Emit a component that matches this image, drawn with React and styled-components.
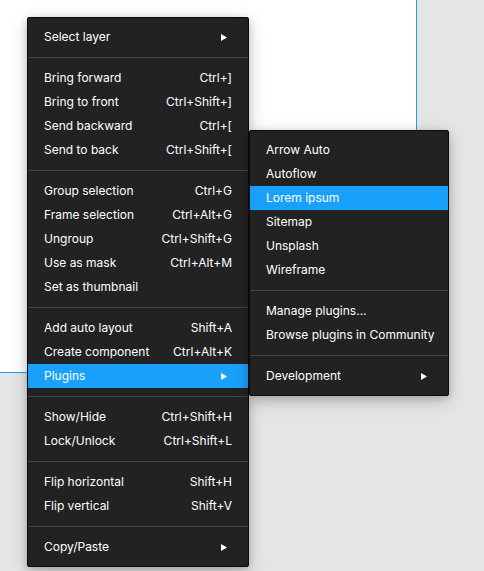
import React from "react";
import styled, { createGlobalStyle } from "styled-components";

const Global = createGlobalStyle`
  html, body { margin: 0; padding: 0; }
  body {
    background: #e5e5e5;
    font-family: Inter, "Noto Sans", sans-serif;
  }
`;

const Page = styled.div`
  position: relative;
  width: 484px;
  height: 571px;
  overflow: hidden;
  background: #e5e5e5;
`;

const Frame = styled.div`
  width: 416px;
  height: 372px;
  background: #ffffff;
  border-right: 1px solid #18a0fb;
  border-bottom: 1px solid #18a0fb;
`;

const Menu = styled.div`
  position: absolute;
  left: ${(p) => p.$left}px;
  top: ${(p) => p.$top}px;
  width: ${(p) => p.$width}px;
  box-sizing: border-box;
  padding: 7px 0;
  background: #222222;
  border: 1px solid #0b0b0b;
  border-radius: 2px;
  box-shadow: 0 5px 17px rgba(0, 0, 0, 0.2), 0 2px 7px rgba(0, 0, 0, 0.15);
  display: flex;
  flex-direction: column;
`;

const Row = styled.div`
  height: 24px;
  display: flex;
  align-items: center;
  justify-content: space-between;
  padding: 0 16px;
  background: ${(p) => (p.$active ? "#18a0fb" : "transparent")};
  color: #ffffff;
  font-size: 12px;
  line-height: 24px;
  white-space: nowrap;
`;

const Label = styled.span``;

const Shortcut = styled.span`
  color: #ffffff;
`;

const Arrow = styled.svg`
  width: 6px;
  height: 7px;
  margin-right: 5px;
  display: block;
`;

const Separator = styled.div`
  flex: none;
  height: 1px;
  margin: 8px 0;
  background: #444444;
`;

const Caret = () => (
  <Arrow viewBox="0 0 6 7">
    <polygon points="0,0 6,3.5 0,7" fill="#ffffff" />
  </Arrow>
);

const mainMenu = [
  [{ label: "Select layer", sub: true }],
  [
    { label: "Bring forward", key: "Ctrl+]" },
    { label: "Bring to front", key: "Ctrl+Shift+]" },
    { label: "Send backward", key: "Ctrl+[" },
    { label: "Send to back", key: "Ctrl+Shift+[" },
  ],
  [
    { label: "Group selection", key: "Ctrl+G" },
    { label: "Frame selection", key: "Ctrl+Alt+G" },
    { label: "Ungroup", key: "Ctrl+Shift+G" },
    { label: "Use as mask", key: "Ctrl+Alt+M" },
    { label: "Set as thumbnail" },
  ],
  [
    { label: "Add auto layout", key: "Shift+A" },
    { label: "Create component", key: "Ctrl+Alt+K" },
    { label: "Plugins", sub: true, active: true },
  ],
  [
    { label: "Show/Hide", key: "Ctrl+Shift+H" },
    { label: "Lock/Unlock", key: "Ctrl+Shift+L" },
  ],
  [
    { label: "Flip horizontal", key: "Shift+H" },
    { label: "Flip vertical", key: "Shift+V" },
  ],
  [{ label: "Copy/Paste", sub: true }],
];

const pluginMenu = [
  [
    { label: "Arrow Auto" },
    { label: "Autoflow" },
    { label: "Lorem ipsum", active: true },
    { label: "Sitemap" },
    { label: "Unsplash" },
    { label: "Wireframe" },
  ],
  [{ label: "Manage plugins..." }, { label: "Browse plugins in Community" }],
  [{ label: "Development", sub: true }],
];

const MenuList = ({ groups, left, top, width }) => (
  <Menu $left={left} $top={top} $width={width}>
    {groups.map((g, gi) => (
      <React.Fragment key={gi}>
        {gi > 0 && <Separator />}
        {g.map((it) => (
          <Row key={it.label} $active={it.active}>
            <Label>{it.label}</Label>
            {it.key && <Shortcut>{it.key}</Shortcut>}
            {it.sub && <Caret />}
          </Row>
        ))}
      </React.Fragment>
    ))}
  </Menu>
);

export default function App() {
  return (
    <Page>
      <Global />
      <Frame />
      <MenuList groups={mainMenu} left={27} top={17} width={222} />
      <MenuList groups={pluginMenu} left={249} top={130} width={200} />
    </Page>
  );
}
